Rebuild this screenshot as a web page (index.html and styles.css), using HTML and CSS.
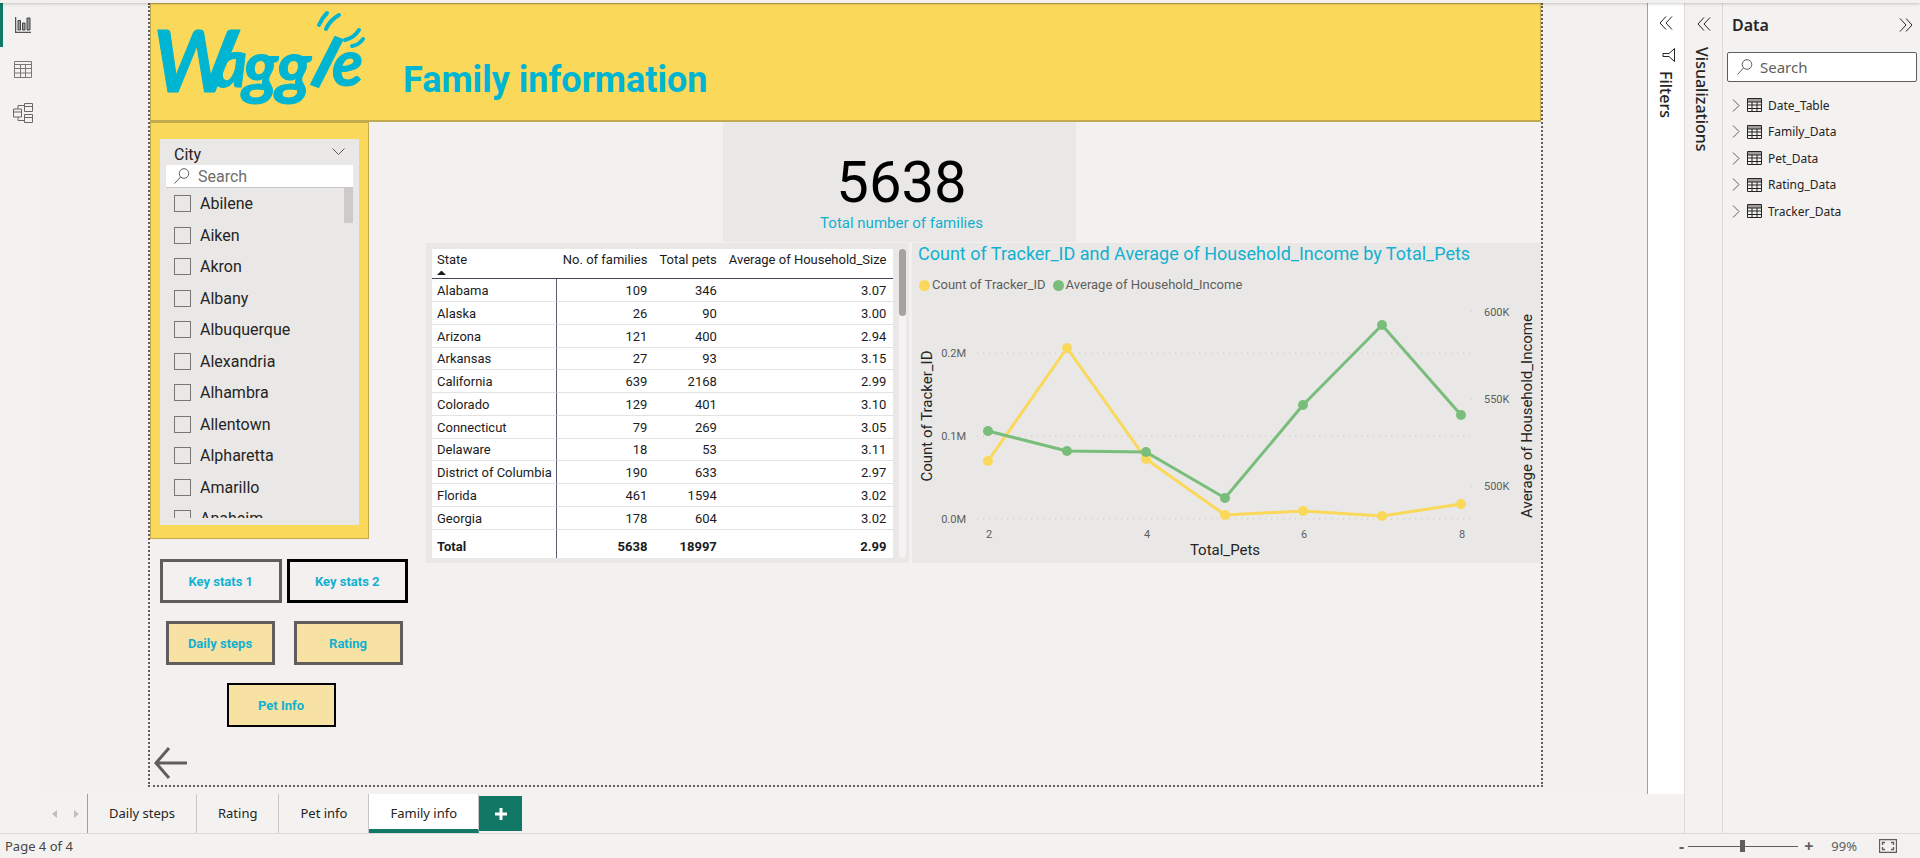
FILE: index.html
```html
<!DOCTYPE html>
<html lang="en">
<head>
<meta charset="utf-8">
<title>Waggle report</title>
<link rel="stylesheet" href="styles.css">
</head>
<body>
<svg class="defs" width="0" height="0" aria-hidden="true">
  <symbol id="lens" viewBox="0 0 16 16"><circle cx="10" cy="5.500" r="4.800"/><path d="M6.500 9L.5 15.500"/></symbol>
  <symbol id="sheet" viewBox="0 0 15 14"><path class="cap" d="M1 1h13v3H1z"/><path d="M.5.5h14v13H.5zM.5 4h14M.5 7h14M.5 10.500h14M5 4v9.500M10 4v9.500"/></symbol>
  <symbol id="chev" viewBox="0 0 8 13"><path d="M1 .5l6 6-6 6"/></symbol>
  <symbol id="dbl" viewBox="0 0 14 14"><path d="M7 .5L1 7l6 6.500M13 .5L7 7l6 6.500"/></symbol>
</svg>
<div class="app">
  <div class="ribbon-edge"></div>
  <div class="workspace">
    <nav class="rail" aria-label="Views">
      <button class="view active" aria-label="Report view"><svg width="16" height="16" viewBox="0 0 16 16"><path d="M.5 0v15.500H16" fill="none" stroke="#555" stroke-width="1.500"/><path d="M3 3.500h2.500V13H3zM7.500 6H10v7H7.500zM12 1h3v12h-3z" fill="#999" stroke="#444"/></svg></button>
      <button class="view" aria-label="Data view"><svg width="18" height="17" viewBox="0 0 18 17"><path d="M.5.5h17v16H.5zM.5 3.500h17M.5 7.500h17M.5 12h17M6.500 3.500v13M11.500 3.500v13" fill="none" stroke="#7a7876"/></svg></button>
      <button class="view" aria-label="Model view"><svg width="20" height="20" viewBox="0 0 20 20"><path d="M11.500.5h8v8h-8zM11.500 11.500h8v8h-8zM.5 6h8v8h-8zM11.500 3.500h8M11.500 14.500h8M.5 9h8M5 6V2.500h6.500M5 14v3.500h6.500" fill="none" stroke="#6b6967"/></svg></button>
    </nav>
    <main class="editor">
      <div class="board">
        <section class="page">
          <header class="banner">
            <svg class="logo" width="220" height="116" viewBox="0 0 220 116" role="img" aria-label="Waggle">
              <g class="word"><text x="2" y="88" font-size="86">W</text><text x="62" y="83" font-size="66">a</text><text x="92" y="87" font-size="70">g</text><text x="125" y="87" font-size="70">g</text><text font-size="72" transform="translate(158 80) rotate(20)">l</text><text x="181" y="82" font-size="64">e</text></g>
              <path class="wag" d="M168 21Q171 14 176 9M175 25Q179 16 188 11M194 36Q203 34 208 26M201 42Q208 41 212 35"/>
            </svg>
            <h1>Family information</h1>
          </header>
          <div class="content">
            <aside class="side">
              <section class="slicer">
                <div class="slicer-body">
                  <div class="slicer-title"><h2>City</h2><svg width="13" height="8" viewBox="0 0 13 8"><path d="M.5.5l6 6 6-6"/></svg></div>
                  <label class="slicer-search"><svg width="16" height="16"><use href="#lens"/></svg><input type="search" placeholder="Search" aria-label="Search city"></label>
                  <div class="slicer-list">
                    <div class="cities">
                      <label><input type="checkbox">Abilene</label>
                      <label><input type="checkbox">Aiken</label>
                      <label><input type="checkbox">Akron</label>
                      <label><input type="checkbox">Albany</label>
                      <label><input type="checkbox">Albuquerque</label>
                      <label><input type="checkbox">Alexandria</label>
                      <label><input type="checkbox">Alhambra</label>
                      <label><input type="checkbox">Allentown</label>
                      <label><input type="checkbox">Alpharetta</label>
                      <label><input type="checkbox">Amarillo</label>
                      <label><input type="checkbox">Anaheim</label>
                    </div>
                    <div class="thumb"></div>
                  </div>
                </div>
              </section>
              <nav class="links" aria-label="Pages">
                <div class="pair wide"><button>Key stats 1</button><button class="on">Key stats 2</button></div>
                <div class="pair"><button class="fill">Daily steps</button><button class="fill">Rating</button></div>
                <div class="pair single"><button class="fill thin">Pet Info</button></div>
              </nav>
              <button class="back" aria-label="Back"><svg width="33" height="32" viewBox="0 0 33 32"><path d="M15 1L2 16l13 15M2 16h31"/></svg></button>
            </aside>
            <div class="visuals">
              <section class="card"><strong>5638</strong><span>Total number of families</span></section>
              <div class="row">
                <section class="grid-visual">
                  <table>
                    <thead><tr><th>State<i class="sort"></i></th><th>No. of families</th><th>Total pets</th><th>Average of Household_Size</th></tr></thead>
                    <tbody>
                      <tr><td>Alabama</td><td>109</td><td>346</td><td>3.07</td></tr>
                      <tr><td>Alaska</td><td>26</td><td>90</td><td>3.00</td></tr>
                      <tr><td>Arizona</td><td>121</td><td>400</td><td>2.94</td></tr>
                      <tr><td>Arkansas</td><td>27</td><td>93</td><td>3.15</td></tr>
                      <tr><td>California</td><td>639</td><td>2168</td><td>2.99</td></tr>
                      <tr><td>Colorado</td><td>129</td><td>401</td><td>3.10</td></tr>
                      <tr><td>Connecticut</td><td>79</td><td>269</td><td>3.05</td></tr>
                      <tr><td>Delaware</td><td>18</td><td>53</td><td>3.11</td></tr>
                      <tr><td>District of Columbia</td><td>190</td><td>633</td><td>2.97</td></tr>
                      <tr><td>Florida</td><td>461</td><td>1594</td><td>3.02</td></tr>
                      <tr><td>Georgia</td><td>178</td><td>604</td><td>3.02</td></tr>
                    </tbody>
                    <tfoot><tr><td>Total</td><td>5638</td><td>18997</td><td>2.99</td></tr></tfoot>
                  </table>
                  <div class="scroll"><div></div></div>
                </section>
                <section class="chart">
                  <h2>Count of Tracker_ID and Average of Household_Income by Total_Pets</h2>
                  <div class="legend"><span class="y">Count of Tracker_ID</span><span class="g">Average of Household_Income</span></div>
                  <svg class="plot" viewBox="0 0 629 268" role="img" aria-label="Line chart">
                    <path class="gridline" d="M65 58H561M65 141H561M65 224H561M559 16h2M559 104h2M559 191h2"/>
                    <g class="tick end"><text x="54" y="62">0.2M</text><text x="54" y="145">0.1M</text><text x="54" y="228">0.0M</text></g>
                    <g class="tick"><text x="572" y="21">600K</text><text x="572" y="108">550K</text><text x="572" y="195">500K</text></g>
                    <g class="tick mid"><text x="77" y="243">2</text><text x="235" y="243">4</text><text x="392" y="243">6</text><text x="550" y="243">8</text></g>
                    <g class="axis mid"><text x="313" y="260">Total_Pets</text><text transform="translate(20 121) rotate(-90)">Count of Tracker_ID</text><text transform="translate(620 121) rotate(-90)">Average of Household_Income</text></g>
                    <g class="sy"><path d="M76 166L155 53 234 164 313 220 391 216 470 221 549 209"/><circle cx="76" cy="166" r="5"/><circle cx="155" cy="53" r="5"/><circle cx="234" cy="164" r="5"/><circle cx="313" cy="220" r="5"/><circle cx="391" cy="216" r="5"/><circle cx="470" cy="221" r="5"/><circle cx="549" cy="209" r="5"/></g>
                    <g class="sg"><path d="M76 136L155 156 234 157 313 203 391 110 470 30 549 120"/><circle cx="76" cy="136" r="5"/><circle cx="155" cy="156" r="5"/><circle cx="234" cy="157" r="5"/><circle cx="313" cy="203" r="5"/><circle cx="391" cy="110" r="5"/><circle cx="470" cy="30" r="5"/><circle cx="549" cy="120" r="5"/></g>
                  </svg>
                </section>
              </div>
            </div>
          </div>
        </section>
      </div>
      <aside class="filters"><button aria-label="Expand filters"><svg class="dark" width="14" height="14"><use href="#dbl"/></svg></button><svg class="funnel" width="13" height="14" viewBox="0 0 13 14"><path d="M12.500.5v13L7 8.500H1v-3h6z"/></svg><h2>Filters</h2></aside>
      <footer class="tabs">
        <button class="step" aria-label="Previous page"><svg width="5" height="8" viewBox="0 0 5 8"><path d="M5 0v8L0 4z"/></svg></button>
        <button class="step" aria-label="Next page"><svg width="5" height="8" viewBox="0 0 5 8"><path d="M0 0v8l5-4z"/></svg></button>
        <button class="tab first">Daily steps</button><button class="tab">Rating</button><button class="tab">Pet info</button><button class="tab current">Family info</button>
        <button class="add" aria-label="New page"><svg width="12" height="12" viewBox="0 0 12 12"><path d="M6 0v12M0 6h12"/></svg></button>
      </footer>
    </main>
    <aside class="viz"><button aria-label="Expand visualizations"><svg class="dark" width="14" height="14"><use href="#dbl"/></svg></button><h2>Visualizations</h2></aside>
    <aside class="data">
      <div class="data-head"><h2>Data</h2><button aria-label="Collapse data"><svg class="flip dark" width="14" height="14"><use href="#dbl"/></svg></button></div>
      <label class="data-search"><svg width="16" height="16"><use href="#lens"/></svg><input type="search" placeholder="Search" aria-label="Search data"></label>
      <ul>
        <li><svg width="8" height="13"><use href="#chev"/></svg><svg class="dark" width="15" height="14"><use href="#sheet"/></svg>Date_Table</li>
        <li><svg width="8" height="13"><use href="#chev"/></svg><svg class="dark" width="15" height="14"><use href="#sheet"/></svg>Family_Data</li>
        <li><svg width="8" height="13"><use href="#chev"/></svg><svg class="dark" width="15" height="14"><use href="#sheet"/></svg>Pet_Data</li>
        <li><svg width="8" height="13"><use href="#chev"/></svg><svg class="dark" width="15" height="14"><use href="#sheet"/></svg>Rating_Data</li>
        <li><svg width="8" height="13"><use href="#chev"/></svg><svg class="dark" width="15" height="14"><use href="#sheet"/></svg>Tracker_Data</li>
      </ul>
    </aside>
  </div>
  <div class="status">
    <span>Page 4 of 4</span>
    <div class="zoom"><button>-</button><input type="range" min="0" max="200" value="99" aria-label="Zoom"><button>+</button><span class="pct">99%</span>
      <button class="fit" aria-label="Fit to page"><svg width="18" height="14" viewBox="0 0 18 14"><path d="M.5.5h17v13H.5zM3.500 6V3.500H6M12 3.500h2.500V6M14.500 8v2.500H12M6 10.500H3.500V8" fill="none" stroke="#605e5c" stroke-width="1.300"/></svg></button></div>
  </div>
</div>
</body>
</html>
```
FILE: styles.css
```css
* { box-sizing: border-box; }
body { margin: 0; font-family: "Noto Sans", sans-serif; font-size: 13px; color: #252423; background: #f3f2f1; }
h1, h2, ul { margin: 0; padding: 0; font-weight: 400; }
button { border: 0; padding: 0; background: none; font: inherit; color: inherit; }
input { font: inherit; }
svg { display: block; flex: none; }
.defs { position: absolute; }
use { fill: none; stroke: #605e5c; }
.dark use { stroke: #252423; }
.cap { fill: #a19f9d; stroke: none; }

.app { min-height: 100vh; display: flex; flex-direction: column; }
.ribbon-edge { height: 3px; background: #f1f0ef; box-shadow: 0 1px 3px #0003; z-index: 1; }
.workspace { flex: 1; display: flex; }

.rail { width: 43px; display: flex; flex-direction: column; }
.view { height: 44px; display: grid; place-items: center; padding-left: 3px; border-left: 3px solid transparent; padding-right: 3px; }
.view.active { border-left-color: #117865; }

.editor { flex: 1; display: grid; grid-template-columns: 1fr 37px; grid-template-rows: 1fr 39px; }
.board { background: #f4f0ef; padding: 0 104px 7px 105px; display: flex; }
.page { flex: 1; border: 2px dotted #605e5c; border-top: 0; font-family: Roboto, sans-serif; display: flex; flex-direction: column; }
.banner { display: flex; align-items: flex-start; background: #fad85a; border: 1px solid #c4aa4e; border-bottom-width: 2px; }
.logo { overflow: visible; }
.word { font-family: Lato, sans-serif; font-style: italic; font-weight: 700; fill: #00b5d1; stroke: #00b5d1; stroke-linejoin: round; }
.wag { fill: none; stroke: #00b5d1; stroke-width: 4; stroke-linecap: round; }
.banner h1 { margin: 51px 0 0 32px; font-size: 36px; line-height: 50px; font-weight: 700; color: #00b5d1; }

.content { flex: 1; display: grid; grid-template-columns: 276px 1fr; }
.side { display: flex; flex-direction: column; align-items: flex-start; }
.slicer { width: 219px; padding: 16px 9px 13px; background: #fad85a; border: 1px solid #c4aa4e; }
.slicer-body { background: #e9e8e6; padding: 6px 6px 7px; }
.slicer-title { display: flex; justify-content: space-between; align-items: center; padding: 0 8px; height: 20px; }
.slicer-title h2 { font-size: 16px; line-height: 20px; }
.slicer-title svg { fill: none; stroke: #605e5c; margin-bottom: 6px; }
.slicer-search { display: flex; align-items: center; gap: 8px; height: 23px; padding: 0 8px; background: #fff; border-bottom: 1px solid #c8c6c4; }
.slicer-search input, .data-search input { min-width: 0; width: 100%; border: 0; padding: 0; background: none; font-size: 16px; }
.slicer-search input::placeholder { color: #6f6d6b; }
.slicer-list { display: flex; justify-content: space-between; height: 330px; overflow: hidden; }
.cities { padding-left: 8px; }
.cities label { display: flex; align-items: center; gap: 9px; height: 31px; font-size: 16px; }
.cities label:nth-child(even) { height: 32px; }
.cities input { appearance: none; flex: none; width: 17px; height: 17px; margin: 0; border: 1px solid #7a7674; }
.thumb { width: 9px; height: 35px; background: #cecaca; }

.links { width: 258px; padding: 20px 0 0 10px; display: flex; flex-direction: column; gap: 18px; }
.pair { display: flex; justify-content: center; gap: 19px; }
.wide { gap: 5px; }
.pair button { width: 109px; height: 44px; border: 3px solid #605e5c; font-size: 13px; font-weight: 700; color: #12b0d0; }
.pair.wide button { width: 122px; }
.pair.single { padding-right: 6px; }
.pair .on { border-color: #000; }
.pair .fill { background: #f7e2a4; }
.pair .thin { border: 2px solid #000; }
.back { margin: 20px 0 0 4px; }
.back path { fill: none; stroke: #605e5c; stroke-width: 3; }

.visuals { display: flex; flex-direction: column; }
.card { width: 353px; height: 120px; margin-left: 297px; padding: 30px 0 0 4px; background: #e9e8e6; display: flex; flex-direction: column; align-items: center; }
.card strong { font-size: 58px; line-height: 60px; font-weight: 400; color: #000; }
.card span { font-size: 15px; line-height: 22px; color: #12b0d0; }
.row { display: flex; gap: 3px; margin-top: 1px; }
.grid-visual { width: 483px; display: flex; gap: 6px; padding: 6px 3px 5px 6px; background: #e9e8e6; }
table { flex: 1; border-collapse: separate; border-spacing: 0; background: #fff; font-size: 13px; color: #1b1b22; }
th, td { padding: 0 6px; text-align: right; font-weight: 400; white-space: nowrap; }
th:last-child, td:last-child { padding-right: 7px; }
th:first-child, td:first-child { text-align: left; padding-left: 5px; padding-right: 4px; }
th { height: 30px; padding-bottom: 6px; vertical-align: top; line-height: 22px; border-bottom: 1px solid #45445c; }
.sort { display: block; width: 9px; border: 4px solid transparent; border-top: 0; border-bottom-color: #1b1b22; margin-bottom: -6px; }
td { height: 23px; }
tbody td { border-bottom: 1px solid #e2e2e2; }
tbody tr:nth-child(4n) td { height: 22px; }
tfoot td { height: 28px; padding-top: 5px; font-weight: 700; }
td:first-child { border-right: 1px solid #5b5a6e; }
.scroll { width: 9px; background: #f4f2f2; border-radius: 5px; }
.scroll div { height: 67px; background: #a6a2a0; border-radius: 5px; }

.chart { flex: 1; background: #e9e8e6; }
.chart h2 { padding-left: 6px; font-size: 18px; line-height: 22px; color: #12b0d0; white-space: nowrap; }
.legend { display: flex; gap: 7px; padding-left: 7px; margin: 10px 0 0; font-size: 13px; line-height: 20px; color: #605e5c; }
.legend span { display: flex; align-items: center; gap: 2px; }
.legend span::before { content: ""; width: 11px; height: 11px; border-radius: 50%; background: #fad85a; }
.legend .g::before { background: #79bd7b; }
.plot { width: 100%; }
.gridline { fill: none; stroke: #c8c6c4; stroke-dasharray: 1 5; }
.tick { font-size: 11px; fill: #605e5c; }
.axis { font-size: 15px; fill: #252423; }
.end { text-anchor: end; }
.mid { text-anchor: middle; }
.sy path, .sg path { fill: none; stroke-width: 3; stroke-linejoin: round; }
.sy { stroke: #fad85a; fill: #fad85a; }
.sg { stroke: #79bd7b; fill: #79bd7b; }
.plot circle { stroke-width: 0; }

.filters { background: #fff; border-left: 1px solid #a19f9d; display: flex; flex-direction: column; align-items: center; padding-top: 13px; }
.funnel { fill: none; stroke: #252423; margin: 18px 0 0 5px; }
.filters h2, .viz h2 { writing-mode: vertical-rl; font-size: 16px; line-height: 22px; font-weight: 500; }
.filters h2 { margin-top: 9px; }
.viz { width: 39px; border: 1px solid #dcdad8; border-width: 0 1px; display: flex; flex-direction: column; align-items: center; padding-top: 14px; }
.viz h2 { margin-top: 16px; padding-right: 4px; }

.tabs { grid-column: 1 / 3; display: flex; align-items: stretch; }
.step { width: 22px; display: grid; place-items: center; }
.step path { fill: #c0bebc; }
.tab { padding: 0 21px 2px; border-right: 1px solid #c8c6c4; font-size: 13px; }
.tab.first { border-left: 1px solid #a19f9d; }
.tab.current { background: #fff; border-bottom: 4px solid #117865; padding-top: 2px; padding-bottom: 0; }
.add { width: 43px; margin: 2px 0; background: #117865; display: grid; place-items: center; }
.add path { stroke: #fff; stroke-width: 3; }

.data { width: 197px; padding: 9px 3px 9px 4px; }
.data-head { display: flex; justify-content: space-between; align-items: center; padding: 0 4px 0 5px; height: 26px; }
.data-head h2 { font-size: 16px; font-weight: 600; }
.flip { transform: scaleX(-1); }
.data-search { display: flex; align-items: center; gap: 7px; height: 30px; margin: 14px 0 10px; padding: 0 9px; background: #fff; border: 1px solid #605e5c; border-radius: 2px; }
.data-search input { font-size: 15px; }
.data-search input::placeholder { color: #605e5c; }
.data li { display: flex; align-items: center; gap: 6px; height: 26px; padding-left: 5px; list-style: none; font-size: 12px; }
.data li:nth-child(even) { height: 27px; }
.data li svg:first-child { margin-right: 1px; }

.status { height: 25px; padding: 0 23px 0 5px; border-top: 1px solid #dcdad8; display: flex; justify-content: space-between; align-items: center; font-size: 13px; color: #484644; }
.zoom { display: flex; align-items: center; }
.zoom button { font-size: 16px; font-weight: 700; line-height: 20px; color: #605e5c; }
.zoom input { appearance: none; width: 110px; height: 12px; margin: 0 6px 0 4px; background: linear-gradient(#605e5c, #605e5c) center / 100% 1px no-repeat; }
.zoom input::-webkit-slider-thumb { appearance: none; width: 5px; height: 12px; background: #605e5c; }
.pct { margin: 0 22px 0 18px; color: #605e5c; }
```
